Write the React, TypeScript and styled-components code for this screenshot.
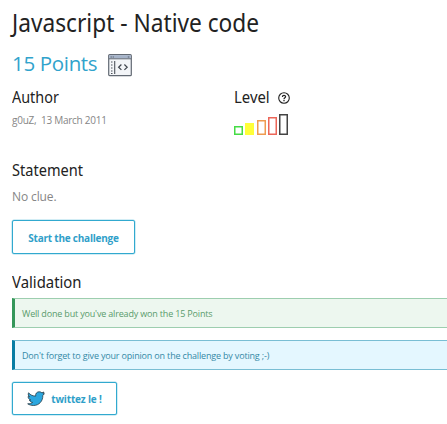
import React from "react";
import styled, { createGlobalStyle } from "styled-components";

const GlobalStyle = createGlobalStyle`
  * { box-sizing: border-box; }
  html, body { margin: 0; background: #fff; overflow: hidden; }
  body { font-family: "Open Sans", "Noto Sans", sans-serif; color: #868686; }
`;

const Page = styled.main`
  display: flex;
  flex-direction: column;
  align-items: flex-start;
  width: 447px;
  height: 424px;
  padding-left: 12px;
  overflow: hidden;
`;

const Title = styled.h1`
  margin: 0;
  font: 400 26px/44px "Noto Sans", sans-serif;
  color: #222;
  white-space: nowrap;
  transform: scaleX(0.873);
  transform-origin: left;
`;

const PointsRow = styled.div`
  display: flex;
  align-items: center;
  gap: 11px;
  height: 38px;

  svg { margin-top: 4px; }
`;

const Points = styled.span`
  font-size: 20.5px;
  line-height: 38px;
  letter-spacing: -0.33px;
  color: #31a3cc;
`;

const Heading = styled.h2<{ $scale?: number }>`
  margin: 0;
  font: 400 16px/20px "Noto Sans", sans-serif;
  color: #222;
  white-space: nowrap;
  transform: scaleX(${(p) => p.$scale ?? 0.9});
  transform-origin: left;
`;

const Details = styled.section`
  display: grid;
  grid-template-columns: 222px 120px;
  height: 54px;
  margin-top: 5px;
`;

const LevelHeading = styled.div`
  display: flex;
  align-items: center;
  gap: 6px;
  height: 20px;

  svg { margin-top: 2px; }
`;

const Meta = styled.p`
  margin: 5px 0 0;
  font-size: 10px;
  line-height: 17px;
  letter-spacing: -0.26px;
  white-space: pre;
`;

const Bars = styled.div`
  display: flex;
  align-items: flex-end;
  gap: 2.3px;
  height: 22px;
  margin-top: 6px;
`;

const Bar = styled.span<{ $h: number; $color: string; $filled?: boolean }>`
  width: 9px;
  height: ${(p) => p.$h}px;
  border: 1px solid ${(p) => p.$color};
  background: ${(p) => (p.$filled ? p.$color : "transparent")};
  box-shadow: inset 0 0 0 0.5px ${(p) => p.$color};
`;

const Statement = styled.section`
  height: 44px;
  margin-top: 19px;
`;

const Body = styled.p`
  margin: 8px 0 0;
  font-size: 12px;
  line-height: 17px;
  letter-spacing: -0.12px;
`;

const Button = styled.button<{ $w: number; $h: number; $top: number; $tracking?: number }>`
  display: flex;
  align-items: center;
  justify-content: center;
  gap: 6px;
  width: ${(p) => p.$w}px;
  height: ${(p) => p.$h}px;
  margin: ${(p) => p.$top}px 0 0;
  padding: 1px 0 0;
  border: 1px solid #31a9cf;
  border-radius: 2px;
  background: #fff;
  box-shadow: 0 0 0 0.5px #a5dcec;
  color: #2f9fc9;
  font: 700 10px/16px "Open Sans", sans-serif;
  letter-spacing: ${(p) => p.$tracking ?? 0}px;
`;

const ValidationHeading = styled(Heading)`
  margin: 18px 0 6px;
`;

const Alert = styled.div<{ $tone: "success" | "info" }>`
  align-self: stretch;
  height: 30px;
  padding: 1px 0 0 7px;
  border: solid ${(p) => (p.$tone === "success" ? "#9dceaf" : "#79bed4")};
  border-width: 1px 0 1px 3px;
  border-left-color: ${(p) => (p.$tone === "success" ? "#35975a" : "#077da4")};
  background: ${(p) => (p.$tone === "success" ? "#edf7ef" : "#e4f7ff")};
  color: ${(p) => (p.$tone === "success" ? "#599b6b" : "#3489a6")};
  font-size: 9px;
  line-height: 28px;
  letter-spacing: -0.175px;
  white-space: nowrap;

  & + & { margin-top: 12px; }
`;

const CodeWindowIcon = () => (
  <svg width="24" height="23" viewBox="0 0 24 23">
    <rect x="0.7" y="0.7" width="22.6" height="21" rx="1" fill="#f3f5f8" stroke="#626973" strokeWidth="1.2" />
    <path d="M1.2 1.2h21.6v3.3H1.2z" fill="#a5b3c9" />
    <path d="M1 4.8h22" stroke="#626973" />
    <path d="M2.6 3h1.2M4.7 3h1.2M19.8 3h1.5" stroke="#59616d" />
    <path d="M3 8h1.5M3 11h1.5M3 14h1.5M3 17h1.5M3 19.500h1.5" stroke="#4d535b" strokeWidth="1.1" />
    <path d="M6.700 7v13" stroke="#4d535b" strokeWidth="1.1" />
    <path d="m13.400 10.500-2.800 2.700 2.800 2.700M16.400 10.500l2.800 2.700-2.800 2.700" fill="none" stroke="#41474f" strokeWidth="1.2" />
  </svg>
);

const HelpIcon = () => (
  <svg width="12" height="12" viewBox="0 0 12 12" fill="none" stroke="#222">
    <circle cx="6" cy="6" r="5.3" strokeWidth="1.1" />
    <path d="M4.4 4.900c0-2 3.200-2 3.200-.1C7.600 5.900 6 5.800 6 7.200" strokeWidth="1.2" />
    <path d="M6 8.100v1.200" strokeWidth="1.3" />
  </svg>
);

const BirdIcon = () => (
  <svg width="18" height="16" viewBox="0 0 18 16">
    <path
      d="M1.600 1.800C3.400 4 6 5.200 8.700 5.100 8.200 2.500 10 .8 12.200.8c1.200 0 2 .4 2.700 1l2.100-.8-.9 1.900 1.300-.2-1.600 1.800c.2 5.500-3.700 10-9.200 10-2.200 0-4.300-.6-5.900-1.700 2 .1 3.600-.4 4.900-1.400-1.700-.2-2.700-1-3.200-2.400h1.400C2.100 8.500 1.100 7.300 1.100 5.500l1.500.4C1.200 4.800.9 3.300 1.600 1.800z"
      fill="#2ca7df"
      stroke="#263c47"
      strokeWidth="0.8"
      strokeLinejoin="round"
    />
  </svg>
);

const levels = [
  { h: 9, color: "#45dc45" },
  { h: 12, color: "#ffff38", filled: true },
  { h: 15, color: "#ef9b50" },
  { h: 18, color: "#ec6659" },
  { h: 21, color: "#444" },
];

export default function App() {
  return (
    <>
      <GlobalStyle />
      <Page>
        <Title>Javascript - Native code</Title>
        <PointsRow>
          <Points>15 Points</Points>
          <CodeWindowIcon />
        </PointsRow>
        <Details>
          <div>
            <Heading>Author</Heading>
            <Meta>{"g0uZ,  13 March 2011"}</Meta>
          </div>
          <div>
            <LevelHeading>
              <Heading $scale={0.93}>Level</Heading>
              <HelpIcon />
            </LevelHeading>
            <Bars>
              {levels.map((l) => (
                <Bar key={l.h} $h={l.h} $color={l.color} $filled={l.filled} />
              ))}
            </Bars>
          </div>
        </Details>
        <Statement>
          <Heading $scale={0.91}>Statement</Heading>
          <Body>No clue.</Body>
        </Statement>
        <Button $w={123} $h={34} $top={16} $tracking={-0.22}>Start the challenge</Button>
        <ValidationHeading $scale={0.93}>Validation</ValidationHeading>
        <Alert $tone="success">Well done but you've already won the 15 Points</Alert>
        <Alert $tone="info">Don't forget to give your opinion on the challenge by voting ;-)</Alert>
        <Button $w={105} $h={33} $top={12} $tracking={-0.17}>
          <BirdIcon />
          twittez le !
        </Button>
      </Page>
    </>
  );
}
